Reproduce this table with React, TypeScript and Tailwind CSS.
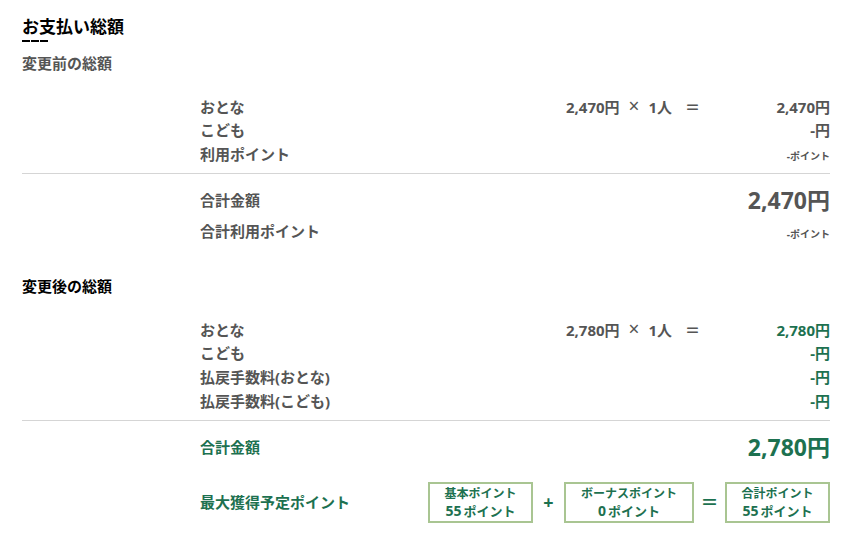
import React from 'react';

const GREEN = 'text-[#1d7150]';

type Row = { label: string; calc?: [string, string]; value: string; unit?: 'yen' | 'pt' };

const beforeRows: Row[] = [
  { label: 'おとな', calc: ['2,470円', '1人'], value: '2,470円' },
  { label: 'こども', value: '-円' },
  { label: '利用ポイント', value: '-', unit: 'pt' },
];

const afterRows: Row[] = [
  { label: 'おとな', calc: ['2,780円', '1人'], value: '2,780円' },
  { label: 'こども', value: '-円' },
  { label: '払戻手数料(おとな)', value: '-円' },
  { label: '払戻手数料(こども)', value: '-円' },
];

const DetailRow: React.FC<{ row: Row; green?: boolean }> = ({ row, green }) => (
  <div className="flex items-center h-[23.7px]">
    <div className="w-[366px] text-[#555]">{row.label}</div>
    <div className="flex-1 flex items-center text-[#555]">
      {row.calc && (
        <>
          <span>{row.calc[0]}</span>
          <span className="ml-[9px] text-[19px] font-normal leading-none">×</span>
          <span className="ml-[9px]">{row.calc[1]}</span>
          <span className="ml-[13px]">＝</span>
        </>
      )}
    </div>
    <div className={`text-right ${green ? GREEN : 'text-[#555]'}`}>
      {row.unit === 'pt' ? (
        <span className="text-[10px]">{row.value}ポイント</span>
      ) : (
        row.value
      )}
    </div>
  </div>
);

const PointBox: React.FC<{ title: string; value: string; w: string }> = ({ title, value, w }) => (
  <div className={`${w} h-[41px] border-2 border-[#a9c592] flex flex-col items-center justify-center leading-[17px] ${GREEN}`}>
    <span className="text-[12px]">{title}</span>
    <span className="text-[13px]">
      <span className="text-[14px]">{value}</span>
      <span className="ml-[2px]">ポイント</span>
    </span>
  </div>
);

export default function App() {
  return (
    <div
      className="w-[855px] h-[538px] bg-white pl-[22px] pr-[25px] pt-[15px] font-bold text-[15px] overflow-hidden"
      style={{ fontFamily: '"Noto Sans", "Noto Sans CJK JP", sans-serif' }}
    >
      <h1 className="text-[17px] leading-[24px] text-black">お支払い総額</h1>
      <div className="flex gap-[1px] mt-[1px]">
        <span className="w-[8px] h-[2px] bg-black" />
        <span className="w-[8px] h-[2px] bg-black" />
        <span className="w-[8px] h-[2px] bg-black" />
      </div>

      <h2 className="mt-[11px] text-[#555] leading-[20px]">変更前の総額</h2>

      <div className="pl-[178px] mt-[22px]">
        {beforeRows.map((r) => (
          <DetailRow key={r.label} row={r} />
        ))}
      </div>
      <div className="border-t border-[#d5d5d5] mt-[7px]" />
      <div className="pl-[178px] mt-[13px] flex items-center justify-between h-[26px]">
        <span className="text-[#555]">合計金額</span>
        <span className="text-[23px] text-[#555]">2,470円</span>
      </div>
      <div className="pl-[178px] mt-[5px] flex items-center justify-between h-[26px] text-[#555]">
        <span>合計利用ポイント</span>
        <span className="text-[10px] mt-[6px]">-ポイント</span>
      </div>

      <h2 className="mt-[32px] text-black leading-[20px]">変更後の総額</h2>

      <div className="pl-[178px] mt-[22px]">
        {afterRows.map((r) => (
          <DetailRow key={r.label} row={r} green />
        ))}
      </div>
      <div className="border-t border-[#d5d5d5] mt-[7px]" />
      <div className={`pl-[178px] mt-[13px] flex items-center justify-between h-[26px] ${GREEN}`}>
        <span>合計金額</span>
        <span className="text-[23px]">2,780円</span>
      </div>
      <div className={`pl-[178px] mt-[22px] flex items-center ${GREEN}`}>
        <span className="flex-1">最大獲得予定ポイント</span>
        <PointBox title="基本ポイント" value="55" w="w-[105px]" />
        <span className="w-[31px] text-center text-[18px]">+</span>
        <PointBox title="ボーナスポイント" value="0" w="w-[130px]" />
        <span className="w-[31px] text-center text-[18px]">＝</span>
        <PointBox title="合計ポイント" value="55" w="w-[105px]" />
      </div>
    </div>
  );
}
